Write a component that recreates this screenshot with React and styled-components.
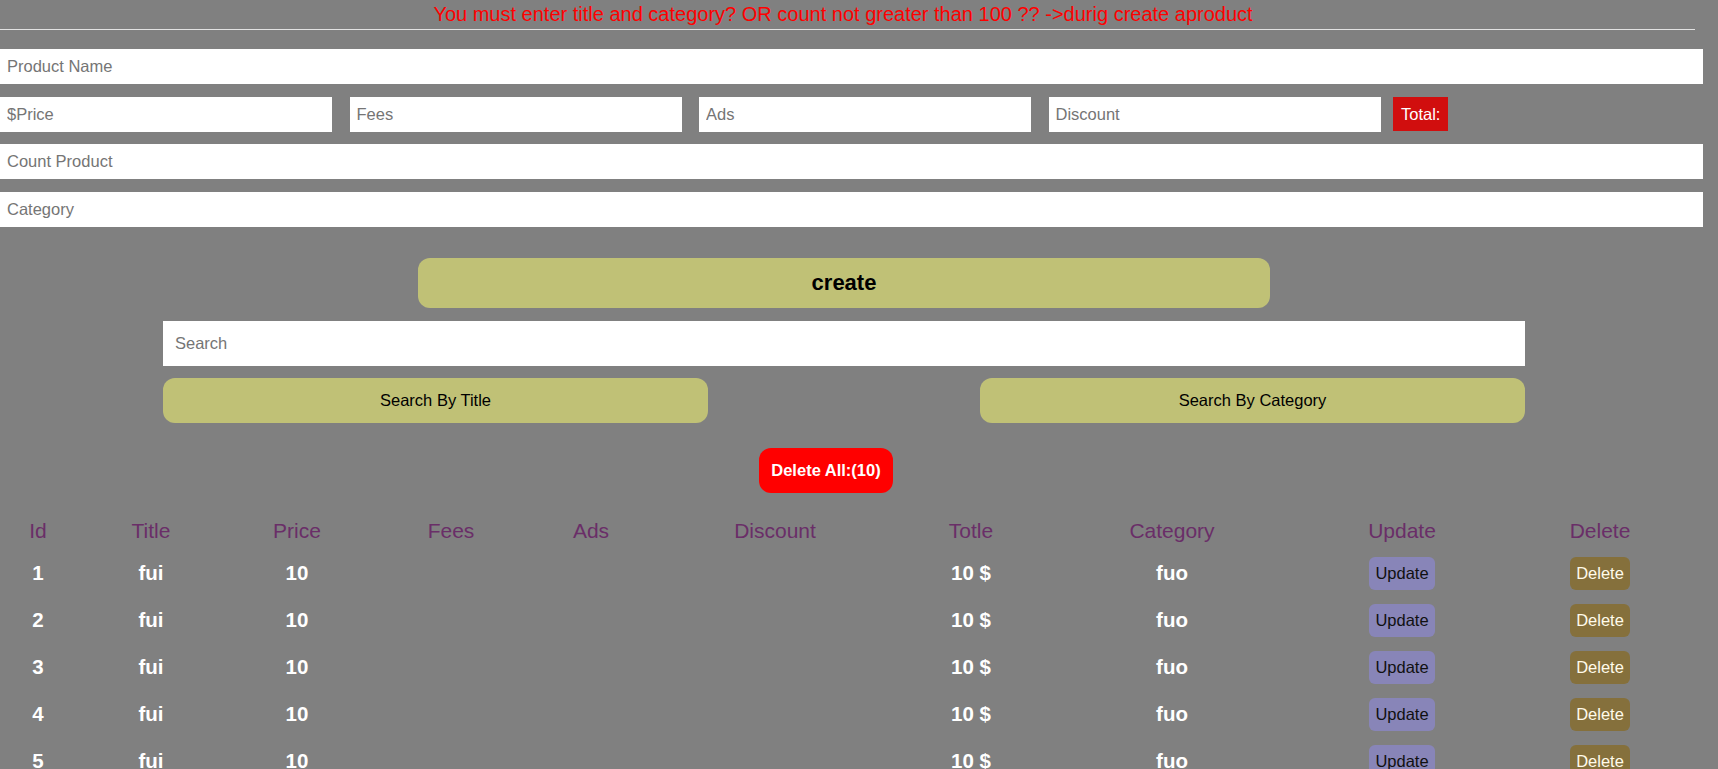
import React, { useState } from "react";
import styled, { createGlobalStyle } from "styled-components";

const GlobalStyle = createGlobalStyle`
  body {
    margin: 0;
    background: #808080;
    font-family: "Liberation Sans", Arial, sans-serif;
  }
`;

const Page = styled.div`
  width: 1718px;
`;

const Message = styled.div`
  width: 1686px;
  height: 29px;
  line-height: 29px;
  text-align: center;
  color: #ff0000;
  font-size: 20px;
`;

const Line = styled.hr`
  width: 1695px;
  margin: 0;
  border: none;
  border-top: 1px solid #e2e2e2;
  height: 0;
`;

const Inputs = styled.div`
  display: flex;
  flex-direction: column;
  gap: 12.5px;
  margin-top: 19px;
  width: 1703px;
`;

const Row = styled.div`
  display: flex;
  align-items: center;
  gap: 17.5px;
`;

const Input = styled.input`
  box-sizing: border-box;
  width: ${(p) => p.$w || "100%"};
  flex: none;
  height: 35px;
  border: none;
  outline: none;
  background: #fff;
  padding: 0 7px;
  font-family: inherit;
  font-size: 16.5px;
  color: #222;
  &::placeholder {
    color: #757575;
  }
`;

const Total = styled.span`
  margin-left: -5px;
  height: 34px;
  line-height: 34px;
  padding: 0 8px;
  background: #d10e0e;
  color: #fff;
  font-size: 16.5px;
`;

const Controls = styled.div`
  width: 1688px;
  display: flex;
  flex-direction: column;
  align-items: center;
  margin-top: 31px;
`;

const CreateButton = styled.button`
  width: 852px;
  height: 50px;
  border: none;
  border-radius: 12px;
  background: #c0c176;
  color: #000;
  font-family: inherit;
  font-weight: bold;
  font-size: 22px;
`;

const SearchInput = styled(Input)`
  width: 1362px;
  height: 45px;
  padding: 0 12px;
  margin-top: 13px;
`;

const SearchRow = styled.div`
  width: 1362px;
  display: flex;
  justify-content: space-between;
  margin-top: 12px;
`;

const SearchButton = styled.button`
  width: 545px;
  height: 45px;
  border: none;
  border-radius: 12px;
  background: #c0c176;
  color: #000;
  font-family: inherit;
  font-size: 16.5px;
`;

const DeleteAllWrap = styled.div`
  width: 1688px;
  display: flex;
  justify-content: center;
  padding-right: 36px;
  box-sizing: border-box;
  margin-top: 25px;
`;

const DeleteAll = styled.button`
  height: 45px;
  padding: 0 12px;
  border: none;
  border-radius: 12px;
  background: #ff0000;
  color: #fff;
  font-family: inherit;
  font-weight: bold;
  font-size: 16.5px;
`;

const Table = styled.table`
  width: 1700px;
  table-layout: fixed;
  border-collapse: collapse;
  margin-top: 19px;
`;

const Col = styled.col`
  width: ${(p) => p.$w}px;
`;

const Th = styled.th`
  height: 38px;
  padding: 0;
  color: #6a2e68;
  font-weight: normal;
  font-size: 21px;
  text-align: center;
`;

const Td = styled.td`
  height: 47px;
  padding: 0;
  color: #fff;
  font-weight: bold;
  font-size: 20.5px;
  text-align: center;
  vertical-align: middle;
`;

const RowButton = styled.button`
  height: 33px;
  padding: 0 6px;
  border: none;
  border-radius: 6px;
  font-family: inherit;
  font-size: 16.5px;
  background: ${(p) => (p.$kind === "delete" ? "#85703c" : "#8885b8")};
  color: ${(p) => (p.$kind === "delete" ? "#fffbea" : "#111")};
`;

const columns = [
  ["Id", 76],
  ["Title", 150],
  ["Price", 142],
  ["Fees", 166],
  ["Ads", 114],
  ["Discount", 254],
  ["Totle", 138],
  ["Category", 264],
  ["Update", 196],
  ["Delete", 200],
];

const products = Array.from({ length: 10 }, (_, i) => ({
  id: i + 1,
  title: "fui",
  price: "10",
  fees: "",
  ads: "",
  discount: "",
  total: "10 $",
  category: "fuo",
}));

const App = () => {
  const [search, setSearch] = useState("");

  return (
    <Page>
      <GlobalStyle />
      <Message>
        You must enter title and category? OR count not greater than 100 ?? -&gt;durig create aproduct
      </Message>
      <Line />
      <Inputs>
        <Input placeholder="Product Name" />
        <Row>
          <Input $w="332px" placeholder="$Price" />
          <Input $w="332px" placeholder="Fees" />
          <Input $w="332px" placeholder="Ads" />
          <Input $w="332px" placeholder="Discount" />
          <Total>Total:</Total>
        </Row>
        <Input placeholder="Count Product" />
        <Input placeholder="Category" />
      </Inputs>
      <Controls>
        <CreateButton>create</CreateButton>
        <SearchInput
          placeholder="Search"
          value={search}
          onChange={(e) => setSearch(e.target.value)}
        />
        <SearchRow>
          <SearchButton>Search By Title</SearchButton>
          <SearchButton>Search By Category</SearchButton>
        </SearchRow>
      </Controls>
      <DeleteAllWrap>
        <DeleteAll>Delete All:({products.length})</DeleteAll>
      </DeleteAllWrap>
      <Table>
        <colgroup>
          {columns.map(([name, w]) => (
            <Col key={name} $w={w} />
          ))}
        </colgroup>
        <thead>
          <tr>
            {columns.map(([name]) => (
              <Th key={name}>{name}</Th>
            ))}
          </tr>
        </thead>
        <tbody>
          {products.map((p) => (
            <tr key={p.id}>
              <Td>{p.id}</Td>
              <Td>{p.title}</Td>
              <Td>{p.price}</Td>
              <Td>{p.fees}</Td>
              <Td>{p.ads}</Td>
              <Td>{p.discount}</Td>
              <Td>{p.total}</Td>
              <Td>{p.category}</Td>
              <Td>
                <RowButton>Update</RowButton>
              </Td>
              <Td>
                <RowButton $kind="delete">Delete</RowButton>
              </Td>
            </tr>
          ))}
        </tbody>
      </Table>
    </Page>
  );
};

export default App;
